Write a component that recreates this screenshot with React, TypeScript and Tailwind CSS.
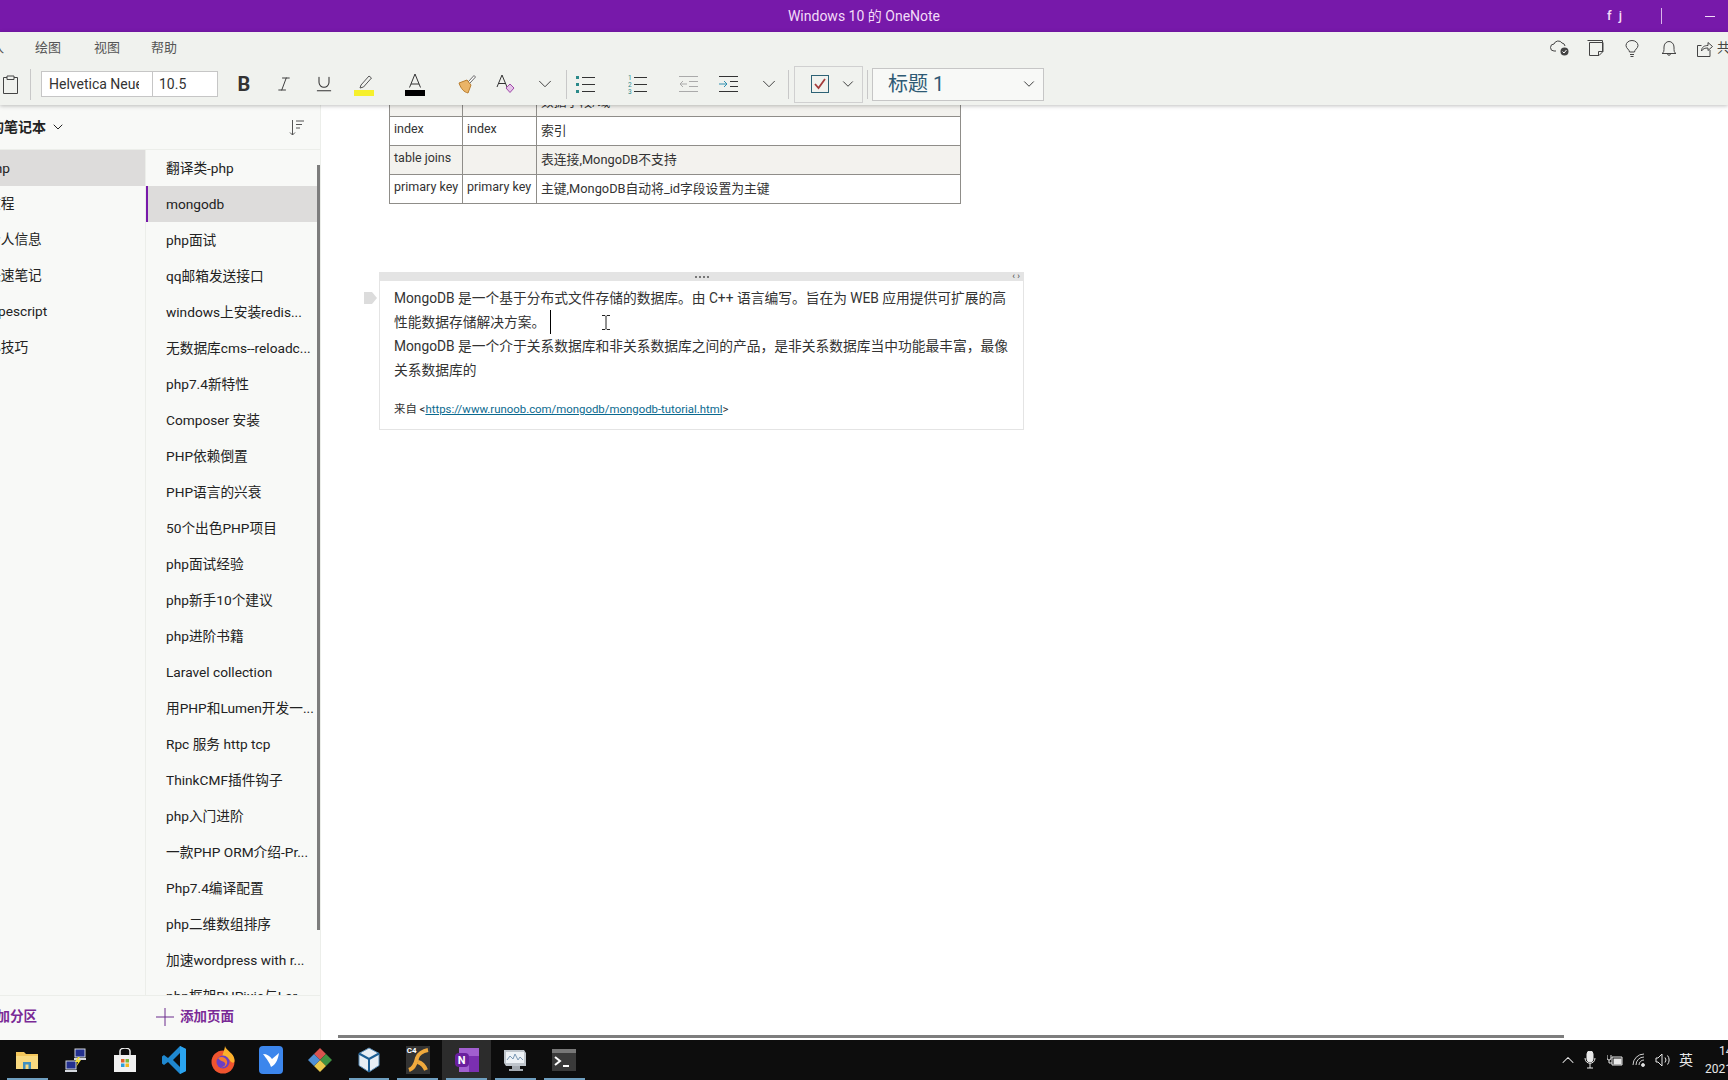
import { ChevronDown, ChevronUp, Italic, Underline } from "lucide-react";

const pages = [
    "翻译类-php", "mongodb", "php面试", "qq邮箱发送接口", "windows上安装redis...", "无数据库cms--reloadc...",
    "php7.4新特性", "Composer 安装", "PHP依赖倒置", "PHP语言的兴衰", "50个出色PHP项目", "php面试经验",
    "php新手10个建议", "php进阶书籍", "Laravel collection", "用PHP和Lumen开发一...", "Rpc 服务 http tcp",
    "ThinkCMF插件钩子", "php入门进阶", "一款PHP ORM介绍-Pr...", "Php7.4编译配置", "php二维数组排序",
    "加速wordpress with r...", "php框架PHPixie与Lar...",
]

const sections = ["php", "教程", "个人信息", "快速笔记", "typescript", "小技巧"]

const rows = [
    { a: "", b: "", c: "数据字段/域", shade: true, h: "h-[29px]" },
    { a: "index", b: "index", c: "索引", shade: false, h: "h-[29px]" },
    { a: "table joins", b: "", c: "表连接,MongoDB不支持", shade: true, h: "h-[29px]" },
    { a: "primary key", b: "primary key", c: "主键,MongoDB自动将_id字段设置为主键", shade: false, h: "h-[29px]" },
]

const TopIcons = () => (
    <div className="flex items-center text-[#444]">
        <svg width="20" height="18" viewBox="0 0 20 18" fill="none" stroke="#444" strokeWidth="1" className="mr-[17px]">
            <path d="M6 12H4a3 3 0 0 1 0-7 4.5 4.5 0 0 1 8-1 3.5 3.5 0 0 1 3 3" />
            <circle cx="14.5" cy="12.5" r="4" fill="#444" stroke="none" />
            <path d="M12.5 12.5l1.5 1.5 2.5-3" stroke="#fff" />
        </svg>
        <svg width="17" height="17" viewBox="0 0 17 17" fill="none" stroke="#444" strokeWidth="1" className="mr-[21px]">
            <path d="M.5.5h15v11M2.5 2.5h13.5v9l-4 4h-9.500zM11.500 15.500v-4h4.500" />
        </svg>
        <svg width="14" height="17" viewBox="0 0 14 17" fill="none" stroke="#444" strokeWidth="1" className="mr-[22px]">
            <path d="M4.500 12c0-2.500-3.500-3.500-3.500-6.500a6 5 0 0 1 12 0c0 3-3.500 4-3.500 6.500zM5 14.500h4M5.500 16.500h3" />
        </svg>
        <svg width="16" height="17" viewBox="0 0 16 17" fill="none" stroke="#444" strokeWidth="1" className="mr-[20px]">
            <path d="M1 13.500c2-1 2-2.500 2-6.500a5 5.500 0 0 1 10 0c0 4 0 5.500 2 6.500zM6.500 13.500a1.500 1.800 0 0 0 3 0" />
        </svg>
        <svg width="16" height="17" viewBox="0 0 16 17" fill="none" stroke="#444" strokeWidth="1" className="mr-[4px]">
            <path d="M13 10v6.500H.5V5.500h4M4.500 11c0-4 3-5.500 6.500-5.500V2.500l4.500 4-4.500 4V8c-3 0-5 .5-6.500 3z" />
        </svg>
        <span className="text-[13px] w-[14px] overflow-hidden whitespace-nowrap">共享</span>
    </div>
)

const Highlighter = () => (
    <svg width="22" height="24" viewBox="0 0 22 24" fill="none">
        <path d="M8 13l8-9 2.500 2-8 9-3.500 1z" stroke="#555" />
        <rect x="1" y="18" width="20" height="6" fill="#f6f02c" />
    </svg>
)

const FontColor = () => (
    <svg width="20" height="24" viewBox="0 0 20 24" fill="none">
        <path d="M4.500 15.500L10 2l5.500 13.500M6 12h8" stroke="#333" />
        <rect x="0" y="18" width="20" height="6" fill="#000" />
    </svg>
)

const Brush = () => (
    <svg width="20" height="20" viewBox="0 0 20 20" fill="none">
        <path d="M11 8l6-6.500 1.500 1.500-6 6.500z" fill="#fff" stroke="#666" />
        <path d="M2 9l8-3 4 5-3 8c-4-1-7-4-9-10z" fill="#eab467" stroke="#b97d2e" />
    </svg>
)

const ClearFormat = () => (
    <svg width="20" height="20" viewBox="0 0 20 20" fill="none">
        <path d="M1 13L6 1l5 12M2.500 9.500h7" stroke="#333" />
        <path d="M10 14l4-4 4 4-4 4.500z" fill="#e4c3e8" stroke="#a04aa8" />
    </svg>
)

const Bullets = () => (
    <svg width="20" height="20" viewBox="0 0 20 20">
        <rect x="0" y="2" width="3" height="3" fill="#2b8a8a" />
        <rect x="0" y="9" width="3" height="3" fill="#2b8a8a" />
        <rect x="0" y="16" width="3" height="3" fill="#2b8a8a" />
        <path d="M6 3.500h13M6 10.500h13M6 17.500h13" stroke="#333" />
    </svg>
)

const Numbered = () => (
    <svg width="20" height="20" viewBox="0 0 20 20">
        <text x="0" y="6" fontSize="6.500" fill="#2b8a8a">1</text>
        <text x="0" y="13" fontSize="6.500" fill="#2b8a8a">2</text>
        <text x="0" y="20" fontSize="6.500" fill="#2b8a8a">3</text>
        <path d="M6 3.500h13M6 10.500h13M6 17.500h13" stroke="#333" />
    </svg>
)

const Outdent = () => (
    <svg width="20" height="20" viewBox="0 0 20 20" fill="none">
        <path d="M0 2.500h19M10 7.500h9M10 12.500h9M0 17.500h19" stroke="#aaa" />
        <path d="M8 10H1M4 7l-3 3 3 3" stroke="#aaa" />
    </svg>
)

const Indent = () => (
    <svg width="20" height="20" viewBox="0 0 20 20" fill="none">
        <path d="M0 2.500h19M11 7.500h8M11 12.500h8M0 17.500h19" stroke="#333" />
        <path d="M0 10h8M5 7l3 3-3 3" stroke="#2f8fb0" />
    </svg>
)

const ToDo = () => (
    <svg width="18" height="18" viewBox="0 0 18 18" fill="none">
        <rect x=".5" y=".5" width="17" height="17" stroke="#2d6275" />
        <path d="M4 9l3.500 4 6.500-9" stroke="#a33b3b" strokeWidth="1.800" />
    </svg>
)

const taskIcons = [
    <svg key="files" width="24" height="24" viewBox="0 0 24 24">
        <path d="M1 4h8l2 2h12v15H1z" fill="#f3c65b" />
        <path d="M1 8h22v13H1z" fill="#f8d97f" />
        <path d="M8 21v-7h8v7h-2.500v-4.500h-3V21z" fill="#3f8fc0" />
    </svg>,
    <svg key="network" width="24" height="24" viewBox="0 0 24 24">
        <rect x="11" y="1" width="10" height="8" fill="#23308f" stroke="#cfd3dd" />
        <rect x="2" y="13" width="10" height="8" fill="#23308f" stroke="#cfd3dd" />
        <path d="M1 22h12v2H1zM10 10h12v2H10z" fill="#d5d8df" />
        <path d="M14 9l-3 5h3l-2 5 5-7h-3l2-3z" fill="#f2df3c" />
    </svg>,
    <svg key="store" width="24" height="24" viewBox="0 0 24 24">
        <path d="M1 7h22v17H1z" fill="#f1f1f1" />
        <path d="M7 7V3a5 3 0 0 1 10 0v4" fill="none" stroke="#eee" strokeWidth="1.500" />
        <rect x="8" y="11" width="3.500" height="3.500" fill="#e2622d" />
        <rect x="12.500" y="11" width="3.500" height="3.500" fill="#7db83c" />
        <rect x="8" y="15.500" width="3.500" height="3.500" fill="#2c9fdc" />
        <rect x="12.500" y="15.500" width="3.500" height="3.500" fill="#f4b81f" />
    </svg>,
    <svg key="vscode" width="24" height="28" viewBox="0 0 24 28">
        <path d="M18 0l6 3v22l-6 3L6 16l-4 3-2-1.500v-7L2 9l4 3z" fill="#1f88d0" />
        <path d="M18 7l-7 7 7 7z" fill="#0d0d0d" />
        <path d="M18 0l6 3v22l-6 3z" fill="#2aa4f0" />
    </svg>,
    <svg key="firefox" width="24" height="28" viewBox="0 0 24 28">
        <circle cx="12" cy="16" r="11.500" fill="#f0542f" />
        <path d="M14 0c1 5 10 7 9.500 15-.5 3-3 2-5-1-2-3-5-2-7-3 0-4 2-6 2.500-11z" fill="#fbb12c" />
        <circle cx="12" cy="16" r="6.500" fill="#6b3fc4" />
        <path d="M7 12c3-2 8-1 9 3s-3 7-6 6c3 0 5-2 4-4s-4-1-7-5z" fill="#f37b33" />
    </svg>,
    <div key="bird" className="w-6 h-7 rounded bg-[#3c86ec] flex items-center justify-center">
        <svg width="18" height="18" viewBox="0 0 18 18"><path d="M1 3c4 0 7 2 9 5l7-6c-1 5-2 11-8 14-1-4-5-9-8-13z" fill="#fff" /></svg>
    </div>,
    <svg key="diamond" width="24" height="24" viewBox="0 0 24 24">
        <path d="M12 0l6 6-6 6-6-6z" fill="#d8534f" />
        <path d="M12 12l6-6 6 6-6 6z" fill="#3f9142" />
        <path d="M12 12l6 6-6 6-6-6z" fill="#e9c74b" />
        <path d="M0 12l6-6 6 6-6 6z" fill="#4f8fd4" />
    </svg>,
    <svg key="vbox" width="24" height="26" viewBox="0 0 24 26">
        <path d="M12 1l10 5.500v12L12 25 2 18.500v-12z" fill="#e8eef4" stroke="#5c8fb8" />
        <path d="M12 12L2 6.500M12 12l10-5.500M12 12v13" stroke="#1c5e94" strokeWidth="2" />
    </svg>,
    <div key="c4" className="relative w-6 h-7 bg-[#333] overflow-hidden">
        <span className="absolute left-px top-0 text-[8px] leading-[10px] font-bold text-white">C4</span>
        <svg width="24" height="28" viewBox="0 0 24 28" fill="none"><path d="M3 24c6-2 7-8 8-12s6-7 11-8M12 16c3 1 6 3 8 8" stroke="#f0a93d" strokeWidth="4" /></svg>
    </div>,
    <div key="onenote" className="relative w-6 h-6">
        <div className="absolute left-[4px] top-0 w-[20px] h-6 bg-[#a25fd0]" />
        <div className="absolute left-[14px] top-[8px] w-[10px] h-[16px] bg-[#7b2fb0]" />
        <div className="absolute left-0 top-[5px] w-[14px] h-[14px] rounded-sm bg-[#6a1f9e] flex items-center justify-center text-white text-[11px] leading-none font-bold">N</div>
    </div>,
    <svg key="monitor" width="24" height="24" viewBox="0 0 24 24">
        <path d="M1 2h20l2 3v13H3l-2-3z" fill="#bfc5cc" />
        <path d="M3 4h18v11H3z" fill="#eef2f6" />
        <path d="M4 12l3-4 3 3 2-5 3 6 2-3 3 3" stroke="#7a98b5" fill="none" />
        <path d="M9 18h8v3h3v2H6v-2h3z" fill="#a5abb2" />
    </svg>,
    <svg key="terminal" width="24" height="22" viewBox="0 0 24 22">
        <rect width="24" height="22" fill="#3a3a3a" />
        <rect width="24" height="4" fill="#777" />
        <path d="M3 8l5 4-5 4" stroke="#fff" strokeWidth="2" fill="none" />
        <path d="M11 17h6" stroke="#fff" strokeWidth="2" />
    </svg>,
]

const openApps = [0, 7, 8, 9, 10, 11]

const Sidebar = () => (
    <aside className="w-[321px] shrink-0 flex flex-col bg-[#f8f9f7] border-r border-[#eceeea] overflow-hidden">
        <div className="h-[45px] shrink-0 flex items-center justify-between border-b border-[#eceeea] pr-[15px]">
            <div className="flex items-center -ml-[24px] text-[14px] font-bold text-[#222]">
                我的笔记本
                <ChevronDown className="w-[16px] h-[16px] ml-[4px]" strokeWidth={1.5} />
            </div>
            <svg width="16" height="17" viewBox="0 0 16 17" fill="none" stroke="#555" strokeWidth="1">
                <path d="M3.500 1v15M1 13.500L3.500 16 6 13.500M7 2h8M7 5.500h6M7 9h4" />
            </svg>
        </div>
        <div className="flex-1 min-h-0 flex">
            <div className="w-[146px] shrink-0 border-r border-[#eceeea]">
                {sections.map((name, i) => (
                    <div key={name} className={`h-[35.800px] flex items-center text-[13.700px] text-[#222] ${i === 0 ? "bg-[#dddcdb]" : ""}`}>
                        <span className="-ml-[13px] whitespace-nowrap">{name}</span>
                    </div>
                ))}
            </div>
            <div className="relative flex-1 overflow-hidden">
                {pages.map((name, i) => (
                    <div key={name} className={`h-[36px] flex items-center text-[13.700px] text-[#222] whitespace-nowrap ${i === 1 ? "bg-[#dddcdb] border-l-2 border-[#7719aa] pl-[18px]" : "pl-[20px]"}`}>
                        {name}
                    </div>
                ))}
                <div className="absolute right-0 top-[15px] w-[3px] h-[765px] bg-[#7d7d7d]" />
            </div>
        </div>
        <div className="h-[45px] shrink-0 flex items-center pb-[3px] border-t border-[#eceeea] text-[13.500px] font-bold text-[#7a2a96]">
            <div className="w-[146px] shrink-0 flex items-center">
                <span className="-ml-[17px] whitespace-nowrap">添加分区</span>
            </div>
            <svg width="18" height="18" viewBox="0 0 18 18" stroke="#6b2a8c" className="ml-[10px] mr-[6px]">
                <path d="M9 0v18M0 9h18" />
            </svg>
            添加页面
        </div>
    </aside>
)

const PageContent = () => (
    <main className="relative flex-1 min-w-0 bg-white overflow-hidden text-[#333]">
        <div className="-mt-[19px] ml-[68px] w-[572px] border border-[#8f8d89] grid grid-cols-[73px_74px_1fr]">
            {rows.map((r, i) => (
                <div key={i} className="contents">
                    <div className={`${r.h} ${r.shade ? "bg-[#f3f2ee]" : ""} ${i > 0 ? "border-t" : ""} border-r border-[#8f8d89] pl-[4px] pt-[3px] text-[12.500px] leading-[18px] whitespace-nowrap`}>{r.a}</div>
                    <div className={`${r.h} ${r.shade ? "bg-[#f3f2ee]" : ""} ${i > 0 ? "border-t" : ""} border-r border-[#8f8d89] pl-[4px] pt-[3px] text-[12.500px] leading-[18px] whitespace-nowrap`}>{r.b}</div>
                    <div className={`${r.h} ${r.shade ? "bg-[#f3f2ee]" : ""} ${i > 0 ? "border-t" : ""} border-[#8f8d89] pl-[4px] flex items-center text-[12.800px] whitespace-nowrap`}>{r.c}</div>
                </div>
            ))}
        </div>

        <div className="relative mt-[68px] ml-[58px] w-[645px] border border-t-0 border-[#e4e4e4]">
            <div className="h-[9px] bg-[#e4e4e4] flex items-center justify-center relative">
                <span className="w-[14px] border-t-2 border-dotted border-[#777]" />
                <span className="absolute right-[3px] top-[-1px] text-[9px] leading-[10px] text-[#444]">‹ ›</span>
            </div>
            <svg width="14" height="12" viewBox="0 0 14 12" className="absolute -left-[16px] top-[20px]">
                <path d="M0 0h8l5 6-5 6H0z" fill="#dcdcdc" />
            </svg>
            <div className="pl-[14px] pt-[5px] pb-[10px] text-[13.750px] leading-[24px] text-[#333] whitespace-nowrap">
                <div>MongoDB 是一个基于分布式文件存储的数据库。由 C++ 语言编写。旨在为 WEB 应用提供可扩展的高</div>
                <div className="flex items-center">
                    性能数据存储解决方案。
                    <span className="w-px h-[24px] bg-black ml-[5px]" />
                </div>
                <div>MongoDB 是一个介于关系数据库和非关系数据库之间的产品，是非关系数据库当中功能最丰富，最像</div>
                <div>关系数据库的</div>
                <div className="mt-[17px] text-[11.400px] leading-[20px]">
                    来自 &lt;<span className="text-[#0b6a8f] underline">https://www.runoob.com/mongodb/mongodb-tutorial.html</span>&gt;
                </div>
            </div>
            {/* mouse pointer */}
            <svg width="8" height="15" viewBox="0 0 8 15" fill="none" stroke="#222" className="absolute left-[222px] top-[43px]">
                <path d="M0 .5h3l1 1 1-1h3M4 1.500v12M0 14.500h3l1-1 1 1h3" />
            </svg>
        </div>

        <div className="absolute left-[17px] bottom-[2px] w-[1226px] h-[3px] bg-[#7d7d7d]" />
    </main>
)

export default function App() {
    return (
        <div className="w-[1728px] h-[1080px] flex flex-col overflow-hidden bg-white [font-family:'Roboto','Noto_Sans_CJK_SC',sans-serif]">
            <header className="h-[32px] shrink-0 bg-[#7719aa] grid grid-cols-3 items-center text-[#f3dcf8] text-[14px]">
                <div />
                <div className="text-center">Windows 10 的 OneNote</div>
                <div className="flex items-center justify-end pr-[13px]">
                    <span className="tracking-[2px] text-[13px] font-medium mr-[37px]">f j</span>
                    <span className="w-px h-[16px] bg-[#d9b5ea] mr-[43px]" />
                    <span className="w-[10px] border-t border-[#f3dcf8]" />
                </div>
            </header>

            <div className="relative z-10 h-[73px] shrink-0 bg-[#f0f2ee] shadow-[0_1px_4px_rgba(0,0,0,0.25)]">
                <div className="h-[32px] flex items-center text-[13px] text-[#555]">
                    <span className="w-[35px] -indent-[22px] overflow-hidden whitespace-nowrap">插入</span>
                    <span className="w-[59px]">绘图</span>
                    <span className="w-[57px]">视图</span>
                    <span className="flex-1">帮助</span>
                    <div className="mr-[-3px]"><TopIcons /></div>
                </div>
                <div className="h-[41px] flex items-center pb-[1px]">
                    <div className="w-[30px] shrink-0 pl-[3px]">
                        <svg width="15" height="19" viewBox="0 0 15 19" fill="none" stroke="#444">
                            <path d="M4 2.500H.5v16h14v-16H11M4 1h7v3.500H4z" />
                        </svg>
                    </div>
                    <span className="w-px h-[31px] bg-[#c8c8c8]" />
                    <div className="ml-[10px] w-[177px] h-[26px] flex bg-white border border-[#c6c6c6] text-[14px] text-[#333] leading-[24px]">
                        <div className="w-[111px] pl-[7px] border-r border-[#c6c6c6]">
                            <div className="w-[90px] overflow-hidden whitespace-nowrap">Helvetica Neue</div>
                        </div>
                        <span className="pl-[6px]">10.5</span>
                    </div>
                    <div className="ml-[6px] w-[40px] flex justify-center text-[20px] font-bold text-[#333]">B</div>
                    <div className="w-[40px] flex justify-center"><Italic className="w-[18px] h-[18px] text-[#333]" strokeWidth={1.25} /></div>
                    <div className="w-[40px] flex justify-center"><Underline className="w-[20px] h-[20px] text-[#333]" strokeWidth={1.25} /></div>
                    <div className="w-[40px] flex justify-center"><Highlighter /></div>
                    <div className="w-[62px] flex justify-center"><FontColor /></div>
                    <div className="w-[42px] flex justify-center"><Brush /></div>
                    <div className="w-[36px] flex justify-center"><ClearFormat /></div>
                    <div className="w-[42px] flex justify-center"><ChevronDown className="w-[22px] h-[22px] text-[#333]" strokeWidth={1} /></div>
                    <span className="w-px h-[29px] bg-[#c8c8c8]" />
                    <div className="w-[38px] flex justify-center"><Bullets /></div>
                    <div className="w-[66px] flex justify-center"><Numbered /></div>
                    <div className="w-[36px] flex justify-center"><Outdent /></div>
                    <div className="w-[44px] flex justify-center"><Indent /></div>
                    <div className="w-[36px] flex justify-center"><ChevronDown className="w-[22px] h-[22px] text-[#333]" strokeWidth={1} /></div>
                    <span className="w-px h-[29px] bg-[#c8c8c8] ml-px" />
                    <div className="ml-[5px] w-[69px] h-[37px] flex items-center border border-[#d0d0d0] pl-[16px]">
                        <ToDo />
                        <ChevronDown className="w-[18px] h-[18px] ml-[10px] text-[#333]" strokeWidth={1.25} />
                    </div>
                    <span className="w-px h-[29px] bg-[#c8c8c8] ml-[4px]" />
                    <div className="ml-[4px] w-[172px] h-[33px] flex items-center justify-between border border-[#c6c6c6] bg-[#f8f9f7] pl-[15px] pr-[5px] text-[20px] text-[#2e5a74]">
                        标题 1
                        <ChevronDown className="w-[18px] h-[18px] text-[#333]" strokeWidth={1.25} />
                    </div>
                </div>
            </div>

            <div className="flex-1 min-h-0 flex">
                <Sidebar />
                <PageContent />
            </div>

            <footer className="h-[40px] shrink-0 bg-[#0d0d0d] flex items-center justify-between text-[#e8e8e8]">
                <div className="flex items-center h-full pl-[3px]">
                    {taskIcons.map((icon, i) => (
                        <div key={i} className={`relative w-[48.800px] h-full flex items-center justify-center ${i === 9 ? "bg-[#2c2c2c]" : ""}`}>
                            {icon}
                            {openApps.includes(i) && <span className="absolute left-[4px] right-[4px] bottom-0 h-[2px] bg-[#6f9fc0]" />}
                        </div>
                    ))}
                </div>
                <div className="flex items-center">
                    <ChevronUp className="w-[20px] h-[20px] mr-[6px]" strokeWidth={1.25} />
                    <svg width="12" height="18" viewBox="0 0 12 18" fill="none" stroke="#e8e8e8" className="mr-[11px]">
                        <rect x="3" y="0" width="6" height="11" rx="3" fill="#e8e8e8" />
                        <path d="M1 7c0 7 10 7 10 0M6 12v5M3 17h6" />
                    </svg>
                    <svg width="16" height="12" viewBox="0 0 16 12" fill="none" stroke="#e8e8e8" className="mr-[9px]">
                        <path d="M5 3h10v8H5z" /><rect x="7" y="5" width="7" height="5" fill="#e8e8e8" /><path d="M0 1v3a2 2 0 0 0 4 0V1M2 6v3h3" />
                    </svg>
                    <svg width="14" height="14" viewBox="0 0 14 14" fill="none" stroke="#cfcfcf" className="mr-[9px]">
                        <path d="M1 12a11 11 0 0 1 11-11M4 12a8 8 0 0 1 8-8M7 12a5 5 0 0 1 5-5" /><circle cx="11" cy="12" r="1.500" fill="#e8e8e8" />
                    </svg>
                    <svg width="16" height="14" viewBox="0 0 16 14" fill="none" stroke="#e8e8e8" className="mr-[8px]">
                        <path d="M1 5h2l4-4v12L3 9H1zM10 4.500a4 4 0 0 1 0 5M12.500 2.500a7 7 0 0 1 0 9" />
                    </svg>
                    <span className="text-[14px] mr-[12px]">英</span>
                    <div className="w-[23px] overflow-hidden text-[12px] leading-[18px] whitespace-nowrap">
                        <div className="pl-[14px]">14:32</div>
                        <div>2021/3/16</div>
                    </div>
                </div>
            </footer>
        </div>
    )
}
